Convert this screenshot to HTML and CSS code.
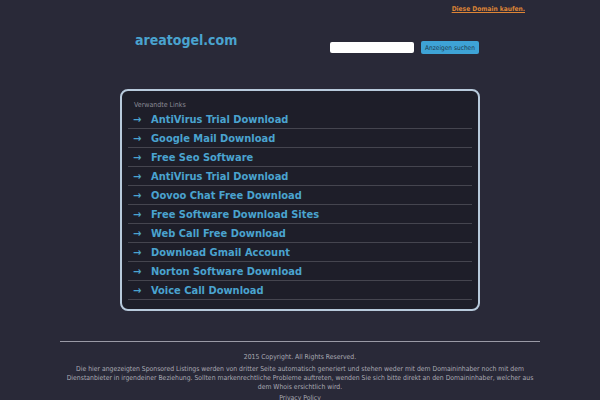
FILE: index.html
```html
<!DOCTYPE html>
<html>
<head>
<meta charset="utf-8">
<link rel="stylesheet" href="styles.css">
</head>
<body>
<div class="topbar"><a class="buy" href="#">Diese Domain kaufen.</a></div>
<div class="header">
  <div class="logo">areatogel.com</div>
  <div class="search">
    <input class="search-input" type="text">
    <button class="search-btn">Anzeigen suchen</button>
  </div>
</div>
<div class="panel">
  <div class="panel-title">Verwandte Links</div>
  <ul class="links">
    <li><span class="arrow">→</span><a href="#">AntiVirus Trial Download</a></li>
    <li><span class="arrow">→</span><a href="#">Google Mail Download</a></li>
    <li><span class="arrow">→</span><a href="#">Free Seo Software</a></li>
    <li><span class="arrow">→</span><a href="#">AntiVirus Trial Download</a></li>
    <li><span class="arrow">→</span><a href="#">Oovoo Chat Free Download</a></li>
    <li><span class="arrow">→</span><a href="#">Free Software Download Sites</a></li>
    <li><span class="arrow">→</span><a href="#">Web Call Free Download</a></li>
    <li><span class="arrow">→</span><a href="#">Download Gmail Account</a></li>
    <li><span class="arrow">→</span><a href="#">Norton Software Download</a></li>
    <li><span class="arrow">→</span><a href="#">Voice Call Download</a></li>
  </ul>
</div>
<div class="footer">
  <div class="rule"></div>
  <p class="copy">2015 Copyright. All Rights Reserved.</p>
  <p class="disclaimer">Die hier angezeigten Sponsored Listings werden von dritter Seite automatisch generiert und stehen weder mit dem Domaininhaber noch mit dem Dienstanbieter in irgendeiner Beziehung. Sollten markenrechtliche Probleme auftreten, wenden Sie sich bitte direkt an den Domaininhaber, welcher aus dem Whois ersichtlich wird.</p>
  <p class="privacy">Privacy Policy</p>
</div>
</body>
</html>
```
FILE: styles.css
```css
html, body {
  margin: 0;
  padding: 0;
  background: #292938;
  font-family: "DejaVu Sans Condensed", "DejaVu Sans", sans-serif;
  font-stretch: condensed;
  width: 600px;
  height: 400px;
  overflow: hidden;
}
.topbar {
  display: flex;
  justify-content: flex-end;
  padding: 5px 75px 0 0;
  height: 14px;
}
.buy {
  color: #de8536;
  font-size: 6.6px;
  font-weight: bold;
  text-decoration: underline;
}
.header {
  display: flex;
  align-items: flex-start;
  padding: 13px 0 0 135px;
  height: 57px;
}
.logo {
  color: #4aa3cf;
  font-size: 14px;
  font-weight: bold;
  width: 195px;
}
.search {
  display: flex;
  align-items: center;
  gap: 7px;
  padding-top: 9px;
}
.search-input {
  width: 84px;
  height: 11px;
  border: none;
  border-radius: 2px;
  background: #fff;
  padding: 0;
  margin: 0;
}
.search-btn {
  width: 58px;
  height: 13px;
  border: none;
  border-radius: 2px;
  background: #3ea3d6;
  color: #1d3a4e;
  font-family: "DejaVu Sans Condensed", "DejaVu Sans", sans-serif;
  font-size: 6.5px;
  padding: 0;
  margin: 0;
}
.panel {
  margin-left: 120px;
  width: 356px;
  border: 2px solid #b8cadc;
  border-radius: 8px;
  background: #1e1e29;
  padding: 11px 0 9px 0;
}
.panel-title {
  color: #8a8a96;
  font-size: 7px;
  padding-left: 12px;
  height: 8px;
  line-height: 7px;
}
.links {
  list-style: none;
  margin: 0 6px 0 6px;
  padding: 0;
}
.links li {
  display: flex;
  align-items: center;
  height: 18px;
  border-bottom: 1px solid #45454f;
  padding-left: 5px;
}
.arrow {
  color: #4aa3cf;
  font-size: 11px;
  font-weight: bold;
  width: 18px;
}
.links a {
  color: #4aa3cf;
  font-size: 11px;
  font-weight: bold;
  text-decoration: none;
}
.footer {
  margin-top: 30px;
  padding: 0 60px;
  text-align: center;
  color: #a9a9b4;
  font-size: 6.8px;
}
.rule {
  height: 1px;
  background: #9a9aa6;
}
.copy {
  margin: 11px 0 0 0;
  line-height: 8px;
}
.disclaimer {
  margin: 4px 0 0 0;
  line-height: 9px;
}
.privacy {
  margin: 2px 0 0 0;
  line-height: 9px;
}
```
